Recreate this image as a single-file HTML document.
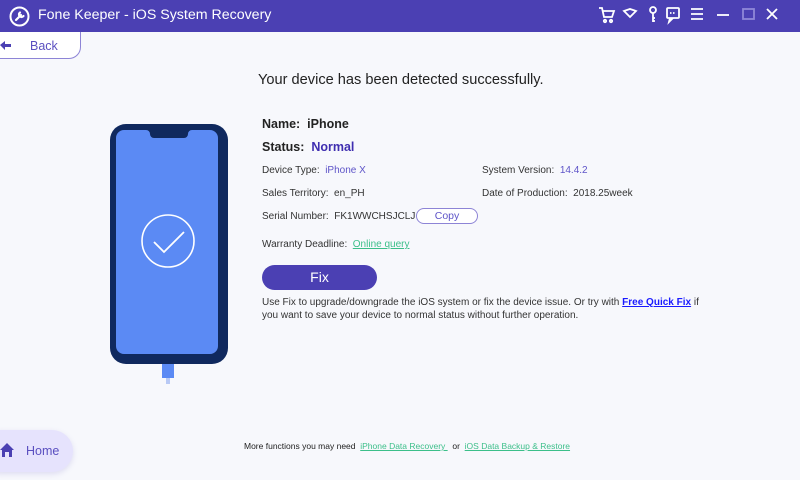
<!DOCTYPE html>
<html><head><style>
*{margin:0;padding:0;box-sizing:border-box}
body{width:800px;height:480px;background:#f7f8fc;font-family:"Liberation Sans",sans-serif;position:relative;overflow:hidden;color:#333}
.hdr{position:absolute;left:0;top:0;width:800px;height:32px;background:#4b40b3}
.t{position:absolute;left:38px;top:7px;color:#fff;font-size:14.2px}
.a{position:absolute;font-size:10px;white-space:nowrap}
</style></head><body>
<div class="hdr">
<svg style="position:absolute;left:9px;top:6px" width="21" height="21" viewBox="0 0 21 21"><circle cx="10.5" cy="10.5" r="9" fill="none" stroke="#fff" stroke-width="2"/><path d="M7 14l5-5M11 6.5a2.5 2.5 0 1 0 3.5 3.5" stroke="#fff" stroke-width="2.2" fill="none" stroke-linecap="round"/></svg>
<div class="t">Fone Keeper - iOS System Recovery</div>
<svg style="position:absolute;left:597px;top:5px" width="200" height="20" viewBox="0 0 200 20" fill="none" stroke="#fff" stroke-width="1.8">
<path d="M2 3h3l2 9h8l2-6H6"/><circle cx="8" cy="16" r="1.2"/><circle cx="14" cy="16" r="1.2"/>
<path d="M27 6l6-2 6 2-6 6z"/>
<circle cx="56" cy="5" r="3"/><path d="M56 8v9M56 13h2M56 16h2"/>
<rect x="70" y="3" width="12" height="10" rx="1"/><path d="M73 13l-1 4 4-4"/><path d="M73 8h6" stroke-dasharray="1.5 1.5"/>
<path d="M94 4h12M94 9h12M94 14h12"/>
<path d="M120 10h12"/>
<rect x="146" y="4" width="11" height="10" stroke="#8f88d8"/>
<path d="M170 4l10 10M180 4l-10 10"/>
</svg>
</div>
<div style="position:absolute;left:-10px;top:32px;width:91px;height:27px;border:1px solid #8d84d6;border-top:none;border-radius:0 0 12px 0;background:#fff"></div>
<svg style="position:absolute;left:0;top:40px" width="12" height="10" viewBox="0 0 12 10"><path d="M0 5l5-4v3h6v3H5v3z" fill="#4b40b3"/></svg>
<div class="a" style="left:30px;top:39px;font-size:12.5px;color:#5a4fc0">Back</div>
<div class="a" style="left:258px;top:72px;font-size:14.6px;color:#222">Your device has been detected successfully.</div>
<svg style="position:absolute;left:108px;top:122px" width="122" height="262" viewBox="0 0 122 262">
<rect x="2" y="2" width="118" height="240" rx="16" fill="#10295e"/>
<path d="M20 8h18a4 4 0 0 1 4 4 4 4 0 0 0 4 4h30a4 4 0 0 0 4-4 4 4 0 0 1 4-4h18a8 8 0 0 1 8 8v208a8 8 0 0 1-8 8H16a8 8 0 0 1-8-8V16a8 8 0 0 1 8-8z" fill="#5b8af4"/>
<circle cx="60" cy="119" r="26" fill="none" stroke="#fff" stroke-width="1.6"/>
<path d="M46 120l10 10 20-20" fill="none" stroke="#fff" stroke-width="1.8"/>
<rect x="54" y="242" width="12" height="14" fill="#5b8af4"/>
<rect x="58" y="256" width="4" height="6" fill="#b8c9f5"/>
</svg>
<div class="a" style="left:262px;top:117px;font-size:12.5px;font-weight:bold;color:#222">Name:&nbsp; iPhone</div>
<div class="a" style="left:262px;top:140px;font-size:12.5px;font-weight:bold;color:#222">Status:&nbsp; <span style="color:#3f2eb0">Normal</span></div>
<div class="a" style="left:262px;top:165px">Device Type:&nbsp; <span style="color:#5e54c8">iPhone X</span></div>
<div class="a" style="left:482px;top:165px">System Version:&nbsp; <span style="color:#5e54c8">14.4.2</span></div>
<div class="a" style="left:262px;top:188px">Sales Territory:&nbsp; en_PH</div>
<div class="a" style="left:482px;top:188px">Date of Production:&nbsp; 2018.25week</div>
<div class="a" style="left:262px;top:211px">Serial Number:&nbsp; FK1WWCHSJCLJ</div>
<div style="position:absolute;left:416px;top:208px;width:62px;height:16px;border:1px solid #8d84d6;border-radius:8px;background:#fff;font-size:10.5px;color:#5e54c8;text-align:center;line-height:14px">Copy</div>
<div class="a" style="left:262px;top:239px">Warranty Deadline:&nbsp; <span style="color:#3cbf8a;text-decoration:underline">Online query</span></div>
<div style="position:absolute;left:262px;top:265px;width:115px;height:25px;border-radius:13px;background:#4b40b3;color:#fff;font-size:14px;text-align:center;line-height:25px">Fix</div>
<div class="a" style="left:262px;top:296px;line-height:13px;color:#333">Use Fix to upgrade/downgrade the iOS system or fix the device issue. Or try with <b style="color:#1a1aff;text-decoration:underline">Free Quick Fix</b> if<br>you want to save your device to normal status without further operation.</div>
<div style="position:absolute;left:-20px;top:430px;width:93px;height:42px;border-radius:21px;background:#e6e3fd;box-shadow:0 2px 6px rgba(120,110,200,.2)"></div>
<svg style="position:absolute;left:0;top:443px" width="16" height="14" viewBox="0 0 16 14"><path d="M0 7L7 0l7 7h-2v7H9V9H5v5H2V7z" fill="#4b40b3"/></svg>
<div class="a" style="left:26px;top:444px;font-size:12.5px;color:#5a4fc0">Home</div>
<div class="a" style="left:244px;top:441px;font-size:8.5px;color:#222">More functions you may need&nbsp; <span style="color:#3cbf8a;text-decoration:underline">iPhone Data Recovery </span>&nbsp; or&nbsp; <span style="color:#3cbf8a;text-decoration:underline">iOS Data Backup &amp; Restore</span></div>
</body></html>
